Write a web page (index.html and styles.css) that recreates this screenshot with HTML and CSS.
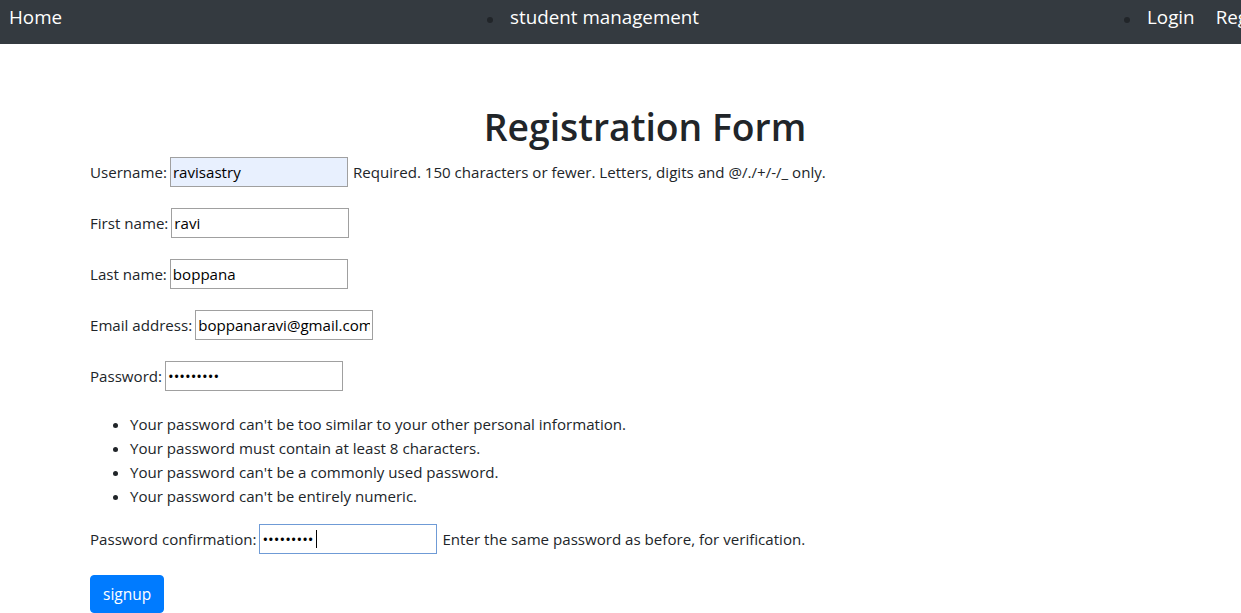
FILE: index.html
```html
<!DOCTYPE html>
<html lang="en">
<head>
<meta charset="utf-8">
<title>Registration Form</title>
<link rel="stylesheet" href="styles.css">
</head>
<body>
<nav class="navbar">
  <a class="nav-home" href="#">Home</a>
  <ul class="nav-center">
    <li><a href="#">student management</a></li>
  </ul>
  <ul class="nav-right">
    <li><a href="#">Login</a></li>
    <li class="nobullet"><a href="#">Register</a></li>
  </ul>
</nav>
<main class="content">
  <h1 class="title">Registration Form</h1>
  <form class="reg-form">
    <p class="row"><label>Username:</label><input class="field autofill" type="text" value="ravisastry"><span class="help">Required. 150 characters or fewer. Letters, digits and @/./+/-/_ only.</span></p>
    <p class="row"><label>First name:</label><input class="field" type="text" value="ravi"></p>
    <p class="row"><label>Last name:</label><input class="field" type="text" value="boppana"></p>
    <p class="row"><label>Email address:</label><input class="field" type="text" value="boppanaravi@gmail.com"></p>
    <p class="row"><label>Password:</label><input class="field" type="password" value="123456789"></p>
    <ul class="pw-help">
      <li>Your password can't be too similar to your other personal information.</li>
      <li>Your password must contain at least 8 characters.</li>
      <li>Your password can't be a commonly used password.</li>
      <li>Your password can't be entirely numeric.</li>
    </ul>
    <p class="row"><label>Password confirmation:</label><span class="field-wrap"><input class="field focused" type="password" value="123456789"><span class="caret"></span></span><span class="help">Enter the same password as before, for verification.</span></p>
    <button class="btn" type="button">signup</button>
  </form>
</main>
</body>
</html>
```

FILE: styles.css
```css
html, body {
  margin: 0;
  padding: 0;
  overflow: hidden;
}
body {
  font-family: "Open Sans", "Noto Sans", sans-serif;
  font-size: 15.1px;
  color: #212529;
  background: #fff;
  line-height: 1.5;
}
.navbar {
  display: flex;
  align-items: flex-start;
  box-sizing: border-box;
  height: 44px;
  padding-top: 2px;
  background: #343a40;
  white-space: nowrap;
  overflow: hidden;
  font-size: 18.8px;
  line-height: 30px;
}
.navbar a {
  color: #fff;
  text-decoration: none;
}
.nav-home {
  margin-left: 9px;
}
.nav-center, .nav-right {
  display: flex;
  margin: 0;
  padding: 0;
  list-style: none;
}
.nav-center {
  margin-left: 448px;
}
.nav-right {
  margin-left: 448px;
}
.nav-center li, .nav-right li {
  position: relative;
}
.nav-center li::before, .nav-right li:not(.nobullet)::before {
  content: "";
  position: absolute;
  left: -23px;
  top: 15px;
  width: 6px;
  height: 6px;
  border-radius: 50%;
  background: #212529;
}
.nav-right li + li {
  margin-left: 21px;
}
.content {
  width: 1110px;
  padding: 59px 0 0 90px;
}
.title {
  margin: 0 0 6px;
  text-align: center;
  font-size: 37.3px;
  font-weight: 600;
  line-height: 48px;
}
.reg-form {
  margin: 0;
}
.row {
  display: flex;
  align-items: center;
  height: 30px;
  margin: 0 0 21px;
}
.row label {
  margin-right: 3px;
}
.field-wrap {
  position: relative;
  display: flex;
}
.field {
  box-sizing: border-box;
  width: 178px;
  height: 30px;
  padding: 1px 2px;
  border: 1px solid #a0a0a0;
  font-family: inherit;
  font-size: 15.1px;
  color: #000;
  background: #fff;
  outline: none;
}
.field.autofill {
  background: #e8f0fe;
}
.field.focused {
  border-color: #6f9bd6;
}
.caret {
  position: absolute;
  left: 57px;
  top: 6px;
  width: 1px;
  height: 18px;
  background: #000;
}
.help {
  margin-left: 5px;
}
.pw-help {
  margin: 0 0 16px;
  padding-left: 40px;
}
.pw-help li {
  line-height: 24px;
}
.btn {
  display: block;
  height: 38px;
  padding: 0 12px;
  border: 1px solid #007bff;
  border-radius: 4px;
  background: #007bff;
  color: #fff;
  font-family: inherit;
  font-size: 15.5px;
}
```
